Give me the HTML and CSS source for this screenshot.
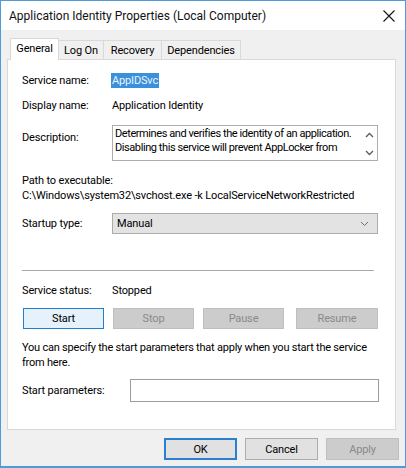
FILE: index.html
```html
<!DOCTYPE html>
<html>
<head>
<meta charset="utf-8">
<link rel="stylesheet" href="styles.css">
</head>
<body>
<div class="window">
  <div class="titlebar">
    <span class="title">Application Identity Properties (Local Computer)</span>
    <svg class="close" width="12" height="12" viewBox="0 0 12 12"><path d="M0.5 0.5 L11.5 11.5 M11.5 0.5 L0.5 11.5" stroke="#111" stroke-width="1.1" fill="none"/></svg>
  </div>
  <div class="client">
    <div class="tabs">
      <div class="tab active t-general">General</div>
      <div class="tab t-logon">Log On</div>
      <div class="tab t-recovery">Recovery</div>
      <div class="tab t-deps">Dependencies</div>
    </div>
    <div class="panel">
      <div class="row r-name"><span class="lbl">Service name:</span><span class="sel">AppIDSvc</span></div>
      <div class="row r-display"><span class="lbl">Display name:</span><span>Application Identity</span></div>
      <div class="row r-desc">
        <span class="lbl desc-lbl">Description:</span>
        <div class="textarea">
          <div class="ta-text">Determines and verifies the identity of an application.<br>Disabling this service will prevent AppLocker from</div>
          <div class="ta-scroll">
            <svg width="9" height="6" viewBox="0 0 9 6"><path d="M1 5 L4.5 1.5 L8 5" stroke="#5a5a5a" stroke-width="1.3" fill="none"/></svg>
            <svg width="9" height="6" viewBox="0 0 9 6"><path d="M1 1 L4.5 4.5 L8 1" stroke="#5a5a5a" stroke-width="1.3" fill="none"/></svg>
          </div>
        </div>
      </div>
      <div class="path-lbl">Path to executable:</div>
      <div class="path">C:\Windows\system32\svchost.exe -k LocalServiceNetworkRestricted</div>
      <div class="row r-startup">
        <span class="lbl">Startup type:</span>
        <div class="select"><span>Manual</span>
          <svg width="9" height="6" viewBox="0 0 9 6"><path d="M1 1 L4.5 4.5 L8 1" stroke="#707070" stroke-width="1" fill="none"/></svg>
        </div>
      </div>
      <div class="sep"></div>
      <div class="row r-status"><span class="lbl">Service status:</span><span>Stopped</span></div>
      <div class="svc-buttons">
        <div class="btn focus">Start</div>
        <div class="btn disabled">Stop</div>
        <div class="btn disabled">Pause</div>
        <div class="btn disabled b-resume">Resume</div>
      </div>
      <div class="hint">You can specify the start parameters that apply when you start the service<br>from here.</div>
      <div class="row r-params">
        <span class="lbl lbl-params">Start parameters:</span>
        <div class="input"></div>
      </div>
    </div>
    <div class="footer">
      <div class="btn dlg default">OK</div>
      <div class="btn dlg">Cancel</div>
      <div class="btn dlg disabled">Apply</div>
    </div>
  </div>
</div>
</body>
</html>
```

FILE: styles.css
```css
* { box-sizing: border-box; }
html, body { margin: 0; padding: 0; background: #fff; }
body {
  font-family: Roboto, "Liberation Sans", Arial, sans-serif;
  font-size: 11px;
  letter-spacing: -0.15px;
  color: #000;
}
.window {
  width: 406px;
  height: 468px;
  border: 1px solid #4f9ad8;
  border-bottom-width: 2px;
  background: #f0f0f0;
  display: flex;
  flex-direction: column;
}
.titlebar {
  height: 29px;
  background: #fff;
  display: flex;
  align-items: center;
  justify-content: space-between;
  padding: 0 10px 0 8px;
}
.title { font-size: 12px; letter-spacing: 0; color: #111; }
.close { margin-top: 1px; }
.client { flex: 1; display: flex; flex-direction: column; padding: 0 9px 0 6px; }
.tabs {
  display: flex;
  align-items: flex-end;
  height: 29px;
  padding-left: 3px;
  position: relative;
  z-index: 1;
}
.tab {
  height: 19px;
  border: 1px solid #d9d9d9;
  border-bottom: none;
  border-left: none;
  display: flex;
  align-items: center;
  justify-content: center;
  background: #f0f0f0;
  padding-top: 1px;
}
.tab.active {
  height: 22px;
  background: #fff;
  border-left: 1px solid #d9d9d9;
  margin-bottom: -1px;
  padding-bottom: 3px;
}
.t-general { width: 49px; }
.t-logon { width: 45px; }
.t-recovery { width: 58px; }
.t-deps { width: 79px; }
.panel {
  height: 371px;
  background: #fff;
  border: 1px solid #d9d9d9;
  padding: 13px 14px 0 14px;
}
.row { display: flex; align-items: center; line-height: 15px; }
.lbl { width: 90px; flex: none; }
.r-display { margin-top: 10px; }
.sel { background: #3b90dc; color: #eaf3fc; padding: 0 1px; margin-left: -1px; }
.r-desc { margin-top: 12px; align-items: flex-start; }
.desc-lbl { padding-top: 5px; }
.textarea {
  width: 266px;
  height: 36px;
  border: 1px solid #abadb3;
  display: flex;
  padding: 1px 0 0 2px;
}
.ta-text { flex: 1; line-height: 14px; overflow: hidden; height: 30px; white-space: nowrap; letter-spacing: -0.42px; }
.ta-scroll {
  width: 15px;
  flex: none;
  display: flex;
  flex-direction: column;
  justify-content: space-between;
  align-items: center;
  padding: 5px 0 4px;
}
.path-lbl { margin-top: 12px; line-height: 15px; }
.path { line-height: 15px; white-space: nowrap; }
.r-startup { margin-top: 10px; }
.select {
  width: 266px;
  height: 21px;
  background: #e3e3e3;
  border: 1px solid #acacac;
  display: flex;
  align-items: center;
  justify-content: space-between;
  padding: 0 8px 0 4px;
}
.sep { height: 1px; background: #a8a8a8; margin: 36px 7px 0 0; }
.r-status { margin-top: 12px; }
.svc-buttons { display: flex; gap: 9px; margin-top: 10px; padding-left: 1px; }
.btn {
  width: 81px;
  height: 21px;
  border: 1px solid #adadad;
  background: #e1e1e1;
  display: flex;
  align-items: center;
  justify-content: center;
}
.btn.focus { background: #e5f1fb; border-color: #1f7fd0; }
.btn.disabled { background: #cccccc; border-color: #bfbfbf; color: #8a8a8a; }
.b-resume { width: 82px; margin-left: 3px; }
.hint { margin-top: 11px; line-height: 15px; white-space: nowrap; letter-spacing: -0.22px; }
.r-params { margin-top: 9px; }
.lbl-params { width: 108px; }
.input { width: 249px; height: 23px; border: 1px solid #9c9c9c; background: #fff; }
.footer {
  display: flex;
  justify-content: flex-end;
  gap: 8px;
  margin-top: 8px;
  margin-right: -3px;
}
.btn.dlg { width: 73px; height: 22px; }
.btn.default { border: 2px solid #2a80cf; }
```
